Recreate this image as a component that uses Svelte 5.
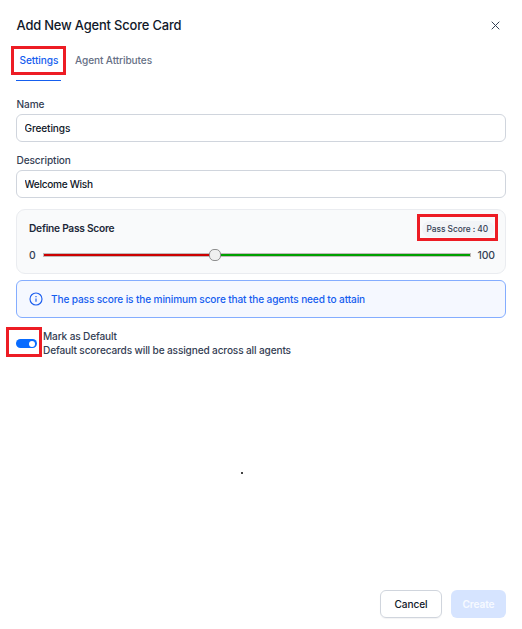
<script>
  let name = $state('Greetings');
  let description = $state('Welcome Wish');
  const score = 40;
</script>

<main class="panel">
  <header>
    <h1>Add New Agent Score Card</h1>
    <button class="close" aria-label="Close">
      <svg width="9" height="9" viewBox="0 0 9 9"><path d="M.7.7l7.6 7.6M8.3.7L.7 8.3" stroke="#344054" stroke-width="1" fill="none" /></svg>
    </button>
  </header>

  <nav>
    <button class="tab active"><span>Settings</span><i class="mark mark-tab"></i></button>
    <button class="tab"><span>Agent Attributes</span></button>
  </nav>

  <label class="field">
    <span>Name</span>
    <input bind:value={name} />
  </label>
  <label class="field">
    <span>Description</span>
    <input class="desc" bind:value={description} />
  </label>

  <section class="card">
    <div class="card-head">
      <h2>Define Pass Score</h2>
      <div class="pill">Pass Score : {score}<i class="mark mark-pill"></i></div>
    </div>
    <div class="range">
      <span class="min">0</span>
      <div class="track">
        <div class="fill" style="width: {score}%"></div>
        <div class="thumb" style="left: calc({score}% - 5.5px)"></div>
      </div>
      <span class="max">100</span>
    </div>
  </section>

  <div class="info">
    <svg width="14" height="14" viewBox="0 0 14 14" fill="none" stroke="#1d5fef" stroke-width="1.15">
      <circle cx="7" cy="7" r="6" />
      <path d="M7 6.5v3.3M7 4.1v1.1" />
    </svg>
    <span>The pass score is the minimum score that the agents need to attain</span>
  </div>

  <div class="default">
    <div class="toggle"><b></b><i class="mark mark-toggle"></i></div>
    <div class="copy">
      <div>Mark as Default</div>
      <div>Default scorecards will be assigned across all agents</div>
    </div>
  </div>

  <div class="blank"><span class="dot"></span></div>

  <footer>
    <button class="cancel">Cancel</button>
    <button class="create" disabled>Create</button>
  </footer>
</main>

<style>
  :global(body) { margin: 0; background: #fff; }
  .panel, .panel * { box-sizing: border-box; }
  .panel {
    width: 522px; height: 629px; padding: 0 16px 11px;
    display: flex; flex-direction: column;
    font-family: Inter, "Liberation Sans", sans-serif;
    font-size: 10.1px; letter-spacing: -0.1px; color: #344054; overflow: hidden; white-space: nowrap;
  }
  button { font: inherit; letter-spacing: inherit; border: 0; background: none; padding: 0; margin: 0; }
  header { height: 46px; padding-top: 5px; display: flex; align-items: center; justify-content: space-between; flex: none; }
  h1 { margin: 0; padding-left: .5px; font-size: 12.9px; letter-spacing: -0.16px; font-weight: 500; color: #101828; }
  .close { width: 9px; height: 9px; display: flex; margin-right: 6px; }
  nav { display: flex; gap: 11px; height: 35px; flex: none; }
  .tab { position: relative; height: 35px; padding: 0 3px 8px; font-weight: 500; color: #667085; display: flex; align-items: center; letter-spacing: -0.1px; }
  .tab.active { width: 45px; color: #155eef; border-bottom: 1px solid #155eef; padding-bottom: 7px; padding-left: 3.5px; letter-spacing: -0.07px; }
  .mark { position: absolute; border: 3px solid #ed1c24; }
  .mark-tab { left: -5px; top: 0; width: 55px; height: 29px; }
  .field { display: flex; flex-direction: column; height: 56px; flex: none; }
  .field:first-of-type { margin-top: 16px; }
  .field span { height: 17px; line-height: 15px; font-weight: 500; padding-left: .5px; }
  .field input {
    width: 490px; height: 28px; border: 1px solid #d0d5dd; border-radius: 6px; outline: 0;
    padding: 0 8px 0 7.5px; font: 450 10.1px Inter, sans-serif; letter-spacing: -0.13px; color: #101828; background: #fff;
  }
  .field .desc { letter-spacing: -0.3px; padding-bottom: 1px; }
  .card { height: 65px; border: 1px solid #eaecf0; border-radius: 9px; background: #f9fafb; padding: 11px 11px 0 12px; flex: none; }
  .card-head { display: flex; align-items: center; justify-content: space-between; height: 16px; }
  h2 { margin: 0; padding-bottom: 2px; font-size: 10.2px; letter-spacing: -0.25px; font-weight: 600; color: #1d2939; }
  .pill { position: relative; height: 16px; line-height: 16px; width: 72px; border-radius: 8px; background: #f2f4f7; padding-left: 4.5px; font-size: 8.4px; letter-spacing: -0.06px; font-weight: 500; color: #344054; }
  .mark-pill { left: -5px; top: -7px; width: 81px; height: 27px; }
  .range { display: flex; align-items: center; height: 14px; margin-top: 11px; font-size: 10.4px; font-weight: 450; }
  .min { width: 14px; flex: none; }
  .max { margin-left: 6.5px; }
  .track { position: relative; width: 428px; height: 4px; background: #00a000; border: 1px solid #c0b9b9; flex: none; }
  .fill { height: 2px; background: #cc0000; }
  .thumb { position: absolute; top: -5px; width: 12px; height: 12px; border: 1px solid #8f8f8f; border-radius: 5px; background: #efefef; }
  .info { height: 38px; margin-top: 6px; border: 1px solid #84adff; border-radius: 6px; background: #f5f8ff; display: flex; align-items: center; padding-left: 12px; gap: 8px; color: #155eef; font-weight: 500; letter-spacing: -0.13px; flex: none; }
  .default { display: flex; margin-top: 12px; height: 28px; flex: none; }
  .toggle { position: relative; width: 21px; height: 9px; margin-top: 9px; border-radius: 5px; background: #086bff; }
  .toggle b { position: absolute; right: 2px; top: 1.5px; width: 6px; height: 6px; border-radius: 50%; background: #fff; }
  .mark-toggle { left: -10px; top: -12px; width: 36px; height: 30px; }
  .copy { margin: -1px 0 0 6px; line-height: 14px; font-weight: 450; letter-spacing: -0.14px; }
  .blank { flex: 1; display: flex; padding: 114px 0 0 225px; }
  .dot { width: 2px; height: 2px; background: #444; }
  footer { display: flex; justify-content: flex-end; gap: 9px; height: 28px; flex: none; }
  .cancel { width: 62px; height: 28px; border: 1px solid #d0d5dd; border-radius: 6px; color: #101828; font-weight: 500; box-shadow: 0 1px 1px #1018280d; }
  .create { width: 55px; height: 28px; border-radius: 6px; background: #d6e4ff; color: #f7faff; font-weight: 600; }
</style>
